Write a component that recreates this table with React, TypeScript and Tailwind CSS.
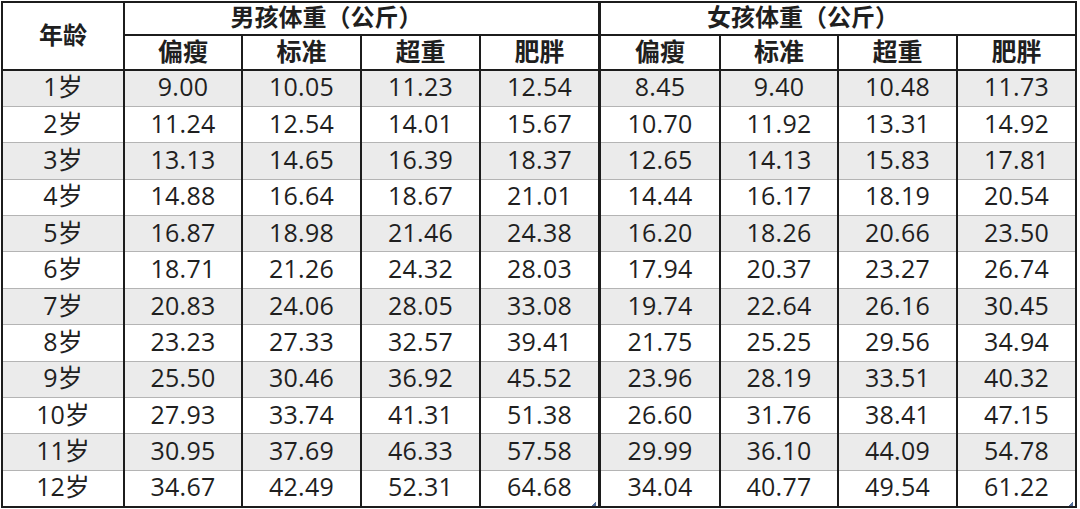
import React from 'react';

type Row = { age: string; boy: string[]; girl: string[] };

const rows: Row[] = [
  { age: '1岁', boy: ['9.00', '10.05', '11.23', '12.54'], girl: ['8.45', '9.40', '10.48', '11.73'] },
  { age: '2岁', boy: ['11.24', '12.54', '14.01', '15.67'], girl: ['10.70', '11.92', '13.31', '14.92'] },
  { age: '3岁', boy: ['13.13', '14.65', '16.39', '18.37'], girl: ['12.65', '14.13', '15.83', '17.81'] },
  { age: '4岁', boy: ['14.88', '16.64', '18.67', '21.01'], girl: ['14.44', '16.17', '18.19', '20.54'] },
  { age: '5岁', boy: ['16.87', '18.98', '21.46', '24.38'], girl: ['16.20', '18.26', '20.66', '23.50'] },
  { age: '6岁', boy: ['18.71', '21.26', '24.32', '28.03'], girl: ['17.94', '20.37', '23.27', '26.74'] },
  { age: '7岁', boy: ['20.83', '24.06', '28.05', '33.08'], girl: ['19.74', '22.64', '26.16', '30.45'] },
  { age: '8岁', boy: ['23.23', '27.33', '32.57', '39.41'], girl: ['21.75', '25.25', '29.56', '34.94'] },
  { age: '9岁', boy: ['25.50', '30.46', '36.92', '45.52'], girl: ['23.96', '28.19', '33.51', '40.32'] },
  { age: '10岁', boy: ['27.93', '33.74', '41.31', '51.38'], girl: ['26.60', '31.76', '38.41', '47.15'] },
  { age: '11岁', boy: ['30.95', '37.69', '46.33', '57.58'], girl: ['29.99', '36.10', '44.09', '54.78'] },
  { age: '12岁', boy: ['34.67', '42.49', '52.31', '64.68'], girl: ['34.04', '40.77', '49.54', '61.22'] },
];

const levels = ['偏瘦', '标准', '超重', '肥胖'];

const headCell = 'border-x-2 border-b-2 border-[#1c1c1c] text-center font-bold leading-none pb-[3px]';
const dataCell =
  'border-x-2 border-x-[#1c1c1c] border-b border-b-[#b4b4b4] text-center text-[25px] leading-none tracking-[0.3px] pb-[3px]';

function CornerMark() {
  return <span className="absolute right-[2px] bottom-[2px] h-[5px] w-[5px] bg-[linear-gradient(135deg,transparent_50%,#56709a_50%)]" />;
}

function WeightTable({
  title,
  pick,
  withAge,
  widths,
}: {
  title: string;
  pick: (r: Row) => string[];
  withAge: boolean;
  widths: number[];
}) {
  const total = widths.reduce((a, b) => a + b, 0);
  return (
    <div className="relative" style={{ width: total }}>
      <table className="w-full table-fixed border-collapse border-2 border-[#1c1c1c] text-[#1f1f1f]">
        <colgroup>
          {widths.map((w, i) => (
            <col key={i} style={{ width: w }} />
          ))}
        </colgroup>
        <thead>
          <tr className="h-[33px] bg-white">
            {withAge && (
              <th rowSpan={2} className={`${headCell} text-[24px]`}>
                年龄
              </th>
            )}
            <th colSpan={4} className={`${headCell} pr-[70px] text-[24px]`}>
              {title}
            </th>
          </tr>
          <tr className="h-[35px] bg-white">
            {levels.map((l) => (
              <th key={l} className={`${headCell} text-[25px]`}>
                {l}
              </th>
            ))}
          </tr>
        </thead>
        <tbody>
          {rows.map((r, i) => (
            <tr key={r.age} className={`h-[36.4px] ${i % 2 === 0 ? 'bg-[#ebebeb]' : 'bg-white'}`}>
              {withAge && <td className={`${dataCell} tracking-normal`}>{r.age}</td>}
              {pick(r).map((v, j) => (
                <td key={j} className={dataCell}>
                  {v}
                </td>
              ))}
            </tr>
          ))}
        </tbody>
      </table>
      <CornerMark />
    </div>
  );
}

export default function App() {
  return (
    <div
      className="flex h-[509px] w-[1080px] items-start gap-[1px] bg-white pl-[1px] pt-[1px]"
      style={{ fontFamily: '"Open Sans", "Noto Sans CJK SC", sans-serif' }}
    >
      <WeightTable title="男孩体重（公斤）" pick={(r) => r.boy} withAge widths={[122, 118, 119, 119, 119]} />
      <WeightTable title="女孩体重（公斤）" pick={(r) => r.girl} withAge={false} widths={[120, 118, 119, 119]} />
    </div>
  );
}
